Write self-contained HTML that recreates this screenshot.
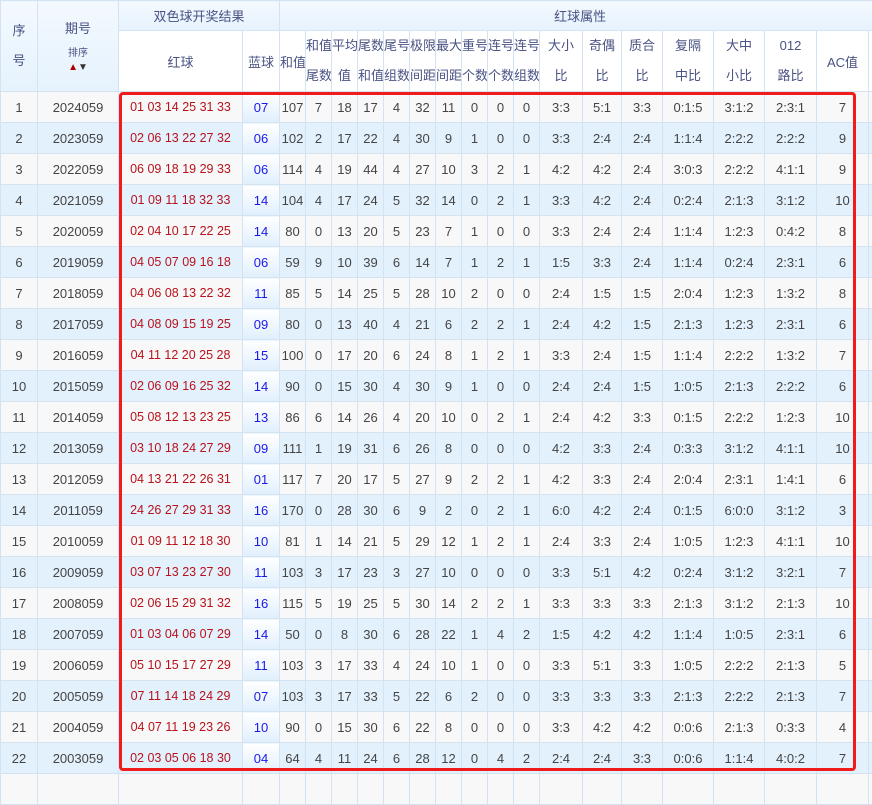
<!DOCTYPE html>
<html><head><meta charset="utf-8"><style>
body{margin:0;background:#fff;width:872px;height:779px;overflow:hidden;position:relative;font-family:"Liberation Sans","Noto Sans CJK SC",sans-serif}
table{border-collapse:collapse;table-layout:fixed;position:absolute;left:0;top:0;width:880px}
td,th{border:1px solid #d3e3f2;text-align:center;padding:0;font-size:13px;color:#444;font-weight:normal;white-space:nowrap;overflow:hidden}
th{background:linear-gradient(#f3f9fe,#e6f2fd);color:#4a5384;font-size:13px}
tr.h2 th{background:#fff}
tr.h2 th.sm{line-height:30px}
tbody tr{height:31px}
tbody tr:nth-child(odd) td{background:#f8f8f8}
tbody tr:nth-child(even) td{background:#e3f1fd}
td.r{color:#b8121b;font-size:12.5px}
tbody tr td.b{color:#1a1ae6;background:linear-gradient(#ffffff,#e0effd)!important}
.box{position:absolute;left:119px;top:92px;width:731px;height:673px;border:3px solid #f01c1c;border-radius:4px}
</style></head><body>
<table>
<colgroup><col style="width:37px"><col style="width:81px"><col style="width:124px"><col style="width:37px"><col style="width:26px"><col style="width:26px"><col style="width:26px"><col style="width:26px"><col style="width:26px"><col style="width:26px"><col style="width:26px"><col style="width:26px"><col style="width:26px"><col style="width:26px"><col style="width:43px"><col style="width:39px"><col style="width:41px"><col style="width:51px"><col style="width:51px"><col style="width:52px"><col style="width:52px"><col style="width:12px"></colgroup>
<thead>
<tr style="height:30px"><th rowspan="2" style="line-height:30px">序<br>号</th><th rowspan="2">期号<br><span style="font-size:10px;line-height:14px;display:inline-block;margin-top:10px">排序<br><span style="color:#a00">▲</span><span style="color:#333">▼</span></span></th><th colspan="2">双色球开奖结果</th><th colspan="18">红球属性</th></tr>
<tr class="h2" style="height:60px"><th>红球</th><th>蓝球</th><th>和值</th><th class="sm">和值<br>尾数</th><th class="sm">平均<br>值</th><th class="sm">尾数<br>和值</th><th class="sm">尾号<br>组数</th><th class="sm">极限<br>间距</th><th class="sm">最大<br>间距</th><th class="sm">重号<br>个数</th><th class="sm">连号<br>个数</th><th class="sm">连号<br>组数</th><th class="sm">大小<br>比</th><th class="sm">奇偶<br>比</th><th class="sm">质合<br>比</th><th class="sm">复隔<br>中比</th><th class="sm">大中<br>小比</th><th class="sm">012<br>路比</th><th>AC值</th><th></th></tr>
</thead>
<tbody>
<tr><td>1</td><td>2024059</td><td class="r">01 03 14 25 31 33</td><td class="b">07</td><td>107</td><td>7</td><td>18</td><td>17</td><td>4</td><td>32</td><td>11</td><td>0</td><td>0</td><td>0</td><td>3:3</td><td>5:1</td><td>3:3</td><td>0:1:5</td><td>3:1:2</td><td>2:3:1</td><td>7</td><td></td></tr>
<tr><td>2</td><td>2023059</td><td class="r">02 06 13 22 27 32</td><td class="b">06</td><td>102</td><td>2</td><td>17</td><td>22</td><td>4</td><td>30</td><td>9</td><td>1</td><td>0</td><td>0</td><td>3:3</td><td>2:4</td><td>2:4</td><td>1:1:4</td><td>2:2:2</td><td>2:2:2</td><td>9</td><td></td></tr>
<tr><td>3</td><td>2022059</td><td class="r">06 09 18 19 29 33</td><td class="b">06</td><td>114</td><td>4</td><td>19</td><td>44</td><td>4</td><td>27</td><td>10</td><td>3</td><td>2</td><td>1</td><td>4:2</td><td>4:2</td><td>2:4</td><td>3:0:3</td><td>2:2:2</td><td>4:1:1</td><td>9</td><td></td></tr>
<tr><td>4</td><td>2021059</td><td class="r">01 09 11 18 32 33</td><td class="b">14</td><td>104</td><td>4</td><td>17</td><td>24</td><td>5</td><td>32</td><td>14</td><td>0</td><td>2</td><td>1</td><td>3:3</td><td>4:2</td><td>2:4</td><td>0:2:4</td><td>2:1:3</td><td>3:1:2</td><td>10</td><td></td></tr>
<tr><td>5</td><td>2020059</td><td class="r">02 04 10 17 22 25</td><td class="b">14</td><td>80</td><td>0</td><td>13</td><td>20</td><td>5</td><td>23</td><td>7</td><td>1</td><td>0</td><td>0</td><td>3:3</td><td>2:4</td><td>2:4</td><td>1:1:4</td><td>1:2:3</td><td>0:4:2</td><td>8</td><td></td></tr>
<tr><td>6</td><td>2019059</td><td class="r">04 05 07 09 16 18</td><td class="b">06</td><td>59</td><td>9</td><td>10</td><td>39</td><td>6</td><td>14</td><td>7</td><td>1</td><td>2</td><td>1</td><td>1:5</td><td>3:3</td><td>2:4</td><td>1:1:4</td><td>0:2:4</td><td>2:3:1</td><td>6</td><td></td></tr>
<tr><td>7</td><td>2018059</td><td class="r">04 06 08 13 22 32</td><td class="b">11</td><td>85</td><td>5</td><td>14</td><td>25</td><td>5</td><td>28</td><td>10</td><td>2</td><td>0</td><td>0</td><td>2:4</td><td>1:5</td><td>1:5</td><td>2:0:4</td><td>1:2:3</td><td>1:3:2</td><td>8</td><td></td></tr>
<tr><td>8</td><td>2017059</td><td class="r">04 08 09 15 19 25</td><td class="b">09</td><td>80</td><td>0</td><td>13</td><td>40</td><td>4</td><td>21</td><td>6</td><td>2</td><td>2</td><td>1</td><td>2:4</td><td>4:2</td><td>1:5</td><td>2:1:3</td><td>1:2:3</td><td>2:3:1</td><td>6</td><td></td></tr>
<tr><td>9</td><td>2016059</td><td class="r">04 11 12 20 25 28</td><td class="b">15</td><td>100</td><td>0</td><td>17</td><td>20</td><td>6</td><td>24</td><td>8</td><td>1</td><td>2</td><td>1</td><td>3:3</td><td>2:4</td><td>1:5</td><td>1:1:4</td><td>2:2:2</td><td>1:3:2</td><td>7</td><td></td></tr>
<tr><td>10</td><td>2015059</td><td class="r">02 06 09 16 25 32</td><td class="b">14</td><td>90</td><td>0</td><td>15</td><td>30</td><td>4</td><td>30</td><td>9</td><td>1</td><td>0</td><td>0</td><td>2:4</td><td>2:4</td><td>1:5</td><td>1:0:5</td><td>2:1:3</td><td>2:2:2</td><td>6</td><td></td></tr>
<tr><td>11</td><td>2014059</td><td class="r">05 08 12 13 23 25</td><td class="b">13</td><td>86</td><td>6</td><td>14</td><td>26</td><td>4</td><td>20</td><td>10</td><td>0</td><td>2</td><td>1</td><td>2:4</td><td>4:2</td><td>3:3</td><td>0:1:5</td><td>2:2:2</td><td>1:2:3</td><td>10</td><td></td></tr>
<tr><td>12</td><td>2013059</td><td class="r">03 10 18 24 27 29</td><td class="b">09</td><td>111</td><td>1</td><td>19</td><td>31</td><td>6</td><td>26</td><td>8</td><td>0</td><td>0</td><td>0</td><td>4:2</td><td>3:3</td><td>2:4</td><td>0:3:3</td><td>3:1:2</td><td>4:1:1</td><td>10</td><td></td></tr>
<tr><td>13</td><td>2012059</td><td class="r">04 13 21 22 26 31</td><td class="b">01</td><td>117</td><td>7</td><td>20</td><td>17</td><td>5</td><td>27</td><td>9</td><td>2</td><td>2</td><td>1</td><td>4:2</td><td>3:3</td><td>2:4</td><td>2:0:4</td><td>2:3:1</td><td>1:4:1</td><td>6</td><td></td></tr>
<tr><td>14</td><td>2011059</td><td class="r">24 26 27 29 31 33</td><td class="b">16</td><td>170</td><td>0</td><td>28</td><td>30</td><td>6</td><td>9</td><td>2</td><td>0</td><td>2</td><td>1</td><td>6:0</td><td>4:2</td><td>2:4</td><td>0:1:5</td><td>6:0:0</td><td>3:1:2</td><td>3</td><td></td></tr>
<tr><td>15</td><td>2010059</td><td class="r">01 09 11 12 18 30</td><td class="b">10</td><td>81</td><td>1</td><td>14</td><td>21</td><td>5</td><td>29</td><td>12</td><td>1</td><td>2</td><td>1</td><td>2:4</td><td>3:3</td><td>2:4</td><td>1:0:5</td><td>1:2:3</td><td>4:1:1</td><td>10</td><td></td></tr>
<tr><td>16</td><td>2009059</td><td class="r">03 07 13 23 27 30</td><td class="b">11</td><td>103</td><td>3</td><td>17</td><td>23</td><td>3</td><td>27</td><td>10</td><td>0</td><td>0</td><td>0</td><td>3:3</td><td>5:1</td><td>4:2</td><td>0:2:4</td><td>3:1:2</td><td>3:2:1</td><td>7</td><td></td></tr>
<tr><td>17</td><td>2008059</td><td class="r">02 06 15 29 31 32</td><td class="b">16</td><td>115</td><td>5</td><td>19</td><td>25</td><td>5</td><td>30</td><td>14</td><td>2</td><td>2</td><td>1</td><td>3:3</td><td>3:3</td><td>3:3</td><td>2:1:3</td><td>3:1:2</td><td>2:1:3</td><td>10</td><td></td></tr>
<tr><td>18</td><td>2007059</td><td class="r">01 03 04 06 07 29</td><td class="b">14</td><td>50</td><td>0</td><td>8</td><td>30</td><td>6</td><td>28</td><td>22</td><td>1</td><td>4</td><td>2</td><td>1:5</td><td>4:2</td><td>4:2</td><td>1:1:4</td><td>1:0:5</td><td>2:3:1</td><td>6</td><td></td></tr>
<tr><td>19</td><td>2006059</td><td class="r">05 10 15 17 27 29</td><td class="b">11</td><td>103</td><td>3</td><td>17</td><td>33</td><td>4</td><td>24</td><td>10</td><td>1</td><td>0</td><td>0</td><td>3:3</td><td>5:1</td><td>3:3</td><td>1:0:5</td><td>2:2:2</td><td>2:1:3</td><td>5</td><td></td></tr>
<tr><td>20</td><td>2005059</td><td class="r">07 11 14 18 24 29</td><td class="b">07</td><td>103</td><td>3</td><td>17</td><td>33</td><td>5</td><td>22</td><td>6</td><td>2</td><td>0</td><td>0</td><td>3:3</td><td>3:3</td><td>3:3</td><td>2:1:3</td><td>2:2:2</td><td>2:1:3</td><td>7</td><td></td></tr>
<tr><td>21</td><td>2004059</td><td class="r">04 07 11 19 23 26</td><td class="b">10</td><td>90</td><td>0</td><td>15</td><td>30</td><td>6</td><td>22</td><td>8</td><td>0</td><td>0</td><td>0</td><td>3:3</td><td>4:2</td><td>4:2</td><td>0:0:6</td><td>2:1:3</td><td>0:3:3</td><td>4</td><td></td></tr>
<tr><td>22</td><td>2003059</td><td class="r">02 03 05 06 18 30</td><td class="b">04</td><td>64</td><td>4</td><td>11</td><td>24</td><td>6</td><td>28</td><td>12</td><td>0</td><td>4</td><td>2</td><td>2:4</td><td>2:4</td><td>3:3</td><td>0:0:6</td><td>1:1:4</td><td>4:0:2</td><td>7</td><td></td></tr>
<tr><td></td><td></td><td></td><td></td><td></td><td></td><td></td><td></td><td></td><td></td><td></td><td></td><td></td><td></td><td></td><td></td><td></td><td></td><td></td><td></td><td></td><td></td></tr>
</tbody></table>
<div class="box"></div>
</body></html>
